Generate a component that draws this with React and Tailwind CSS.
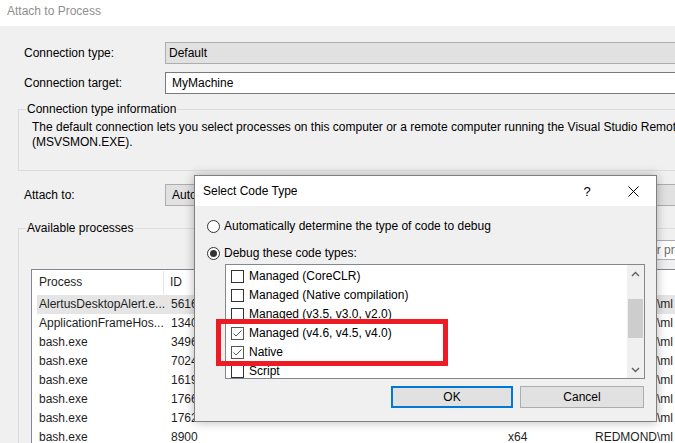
import React from 'react';

const processes = [
    { name: 'AlertusDesktopAlert.e...', id: '5616', selected: true },
    { name: 'ApplicationFrameHos...', id: '1340' },
    { name: 'bash.exe', id: '3496' },
    { name: 'bash.exe', id: '7024' },
    { name: 'bash.exe', id: '1619' },
    { name: 'bash.exe', id: '1766' },
    { name: 'bash.exe', id: '1762' },
    { name: 'bash.exe', id: '8900' },
];

const codeTypes = [
    { label: 'Managed (CoreCLR)', checked: false },
    { label: 'Managed (Native compilation)', checked: false },
    { label: 'Managed (v3.5, v3.0, v2.0)', checked: false },
    { label: 'Managed (v4.6, v4.5, v4.0)', checked: true },
    { label: 'Native', checked: true },
    { label: 'Script', checked: false },
];

const Checkbox = ({ checked }) => (
    <div className={`w-[13px] h-[13px] shrink-0 bg-white border ${checked ? 'border-[#555]' : 'border-[#333]'}`}>
        {checked && (
            <svg width="11" height="11" viewBox="0 0 11 11">
                <path d="M1.5 5.5 L4 8 L9.5 2.5" fill="none" stroke="#555" strokeWidth="1" />
            </svg>
        )}
    </div>
);

const Radio = ({ checked, label }) => (
    <div className="flex items-center h-[16px] gap-[4px]">
        <div className="w-[13px] h-[13px] rounded-full border border-[#333] bg-white flex items-center justify-center">
            {checked && <div className="w-[7px] h-[7px] rounded-full bg-[#333]" />}
        </div>
        <span>{label}</span>
    </div>
);

const Chevron = ({ down }) => (
    <svg width="9" height="6" viewBox="0 0 9 6">
        <path d={down ? 'M1 1 L4.5 4.5 L8 1' : 'M1 5 L4.5 1.5 L8 5'} fill="none" stroke="#606060" strokeWidth="1.4" />
    </svg>
);

const SelectCodeType = () => (
    <div className="absolute left-[194px] top-[175px] w-[463px] h-[247px] border border-[#808080] bg-[#f0f0f0] shadow-[0_0_10px_rgba(0,0,0,0.28)] flex flex-col">
        <div className="h-[30px] bg-white flex items-center justify-between pl-[8px]">
            <span>Select Code Type</span>
            <div className="flex h-full">
                <div className="w-[46px] h-full flex items-center justify-center text-[13px]">?</div>
                <div className="w-[46px] h-full flex items-center justify-center">
                    <svg width="11" height="11" viewBox="0 0 11 11">
                        <path d="M0.5 0.5 L10.5 10.5 M10.5 0.5 L0.5 10.5" stroke="#000" strokeWidth="1" />
                    </svg>
                </div>
            </div>
        </div>

        <div className="pl-[12px] pt-[12px]">
            <Radio label="Automatically determine the type of code to debug" />
            <div className="mt-[11px]">
                <Radio checked label="Debug these code types:" />
            </div>

            <div className="mt-[3px] ml-[18px] w-[420px] h-[115px] border border-[#828790] bg-white flex overflow-hidden">
                <div className="flex-1 pt-[2px]">
                    {codeTypes.map((t) => (
                        <div key={t.label} className="h-[19px] flex items-center pl-[5px] gap-[5px] whitespace-nowrap">
                            <Checkbox checked={t.checked} />
                            <span>{t.label}</span>
                        </div>
                    ))}
                </div>
                <div className="w-[17px] bg-[#f0f0f0] flex flex-col">
                    <div className="h-[17px] flex items-center justify-center"><Chevron /></div>
                    <div className="mt-[17px] mx-[1px] h-[39px] bg-[#cdcdcd]" />
                    <div className="flex-1" />
                    <div className="h-[17px] flex items-center justify-center"><Chevron down /></div>
                </div>
            </div>

            <div className="mt-[7px] pr-[12px] flex justify-end gap-[7px]">
                <button className="w-[122px] h-[22px] border-2 border-[#0078d7] bg-[#e1e1e1]">OK</button>
                <button className="w-[124px] h-[22px] border border-[#adadad] bg-[#e1e1e1]">Cancel</button>
            </div>
        </div>
    </div>
);

export default function App() {
    return (
        <div className="relative w-[675px] h-[443px] overflow-hidden bg-[#f0f0f0] text-[12px] leading-[15px] text-black font-['Liberation_Sans',Arial,sans-serif]">
            <div className="w-[790px]">
                <div className="h-[26px] bg-white pl-[7px] pt-[4px] text-[#8f8f8f]">Attach to Process</div>

                <div className="pl-[18px] pt-[16px]">
                    <div className="pl-[6px] flex items-center h-[22px]">
                        <span className="w-[141px]">Connection type:</span>
                        <div className="w-[600px] h-[22px] border border-[#adadad] bg-[#e1e1e1] pl-[3px] flex items-center">Default</div>
                    </div>
                    <div className="mt-[8px] pl-[6px] flex items-center h-[22px]">
                        <span className="w-[141px]">Connection target:</span>
                        <div className="w-[600px] h-[22px] border border-[#7a7a7a] bg-white pl-[6px] flex items-center">MyMachine</div>
                    </div>

                    <fieldset className="mt-[8px] w-[740px] border border-[#dcdcdc] pl-[13px] pt-[3px] pb-[20px]">
                        <legend className="ml-[-6px] px-[1px]">Connection type information</legend>
                        <p className="whitespace-nowrap">
                            The default connection lets you select processes on this computer or a remote computer running the Visual Studio Remote Debugging Monitor
                            <br />
                            (MSVSMON.EXE).
                        </p>
                    </fieldset>

                    <div className="mt-[13px] pl-[6px] flex items-center h-[22px]">
                        <span className="w-[141px]">Attach to:</span>
                        <div className="w-[600px] h-[22px] border border-[#adadad] bg-[#e1e1e1] pl-[6px] flex items-center">Automatic: Native code</div>
                    </div>

                    <fieldset className="mt-[15px] w-[740px] border border-[#dcdcdc] pl-[12px] h-[260px]">
                        <legend className="ml-[-5px] px-[1px]">Available processes</legend>
                        <div className="mt-[4px] ml-[599px] w-[200px] h-[20px] border border-[#abadb3] bg-white pl-[3px] flex items-center text-[#6d6d6d]">
                            Filter processes
                        </div>

                        <div className="mt-[9px] w-[700px] border border-[#828790] bg-white text-[#1e1e1e]">
                            <div className="h-[25px] flex items-center whitespace-nowrap">
                                <div className="w-[132px] pl-[7px] h-[23px] flex items-center border-r border-[#e5e5e5]">Process</div>
                                <div className="w-[80px] pl-[6px]">ID</div>
                                <div className="w-[257px] pl-[7px]">Title</div>
                                <div className="w-[87px] pl-[7px]">Type</div>
                                <div className="pl-[7px]">User Name</div>
                            </div>
                            {processes.map((p, i) => (
                                <div
                                    key={i}
                                    className={`ml-[5px] h-[19px] flex items-center whitespace-nowrap ${p.selected ? 'bg-[#e5e5e5]' : ''}`}
                                >
                                    <div className="w-[127px] pl-[2px]">{p.name}</div>
                                    <div className="w-[80px] pl-[7px]">{p.id}</div>
                                    <div className="w-[257px]"></div>
                                    <div className="w-[87px] pl-[7px]">x64</div>
                                    <div className="pl-[7px]">REDMOND\ml</div>
                                </div>
                            ))}
                        </div>
                    </fieldset>
                </div>
            </div>

            <SelectCodeType />

            <div className="absolute left-[216px] top-[319px] w-[232px] h-[47px] border-[5px] border-[#ed1c24]" />
        </div>
    );
}
